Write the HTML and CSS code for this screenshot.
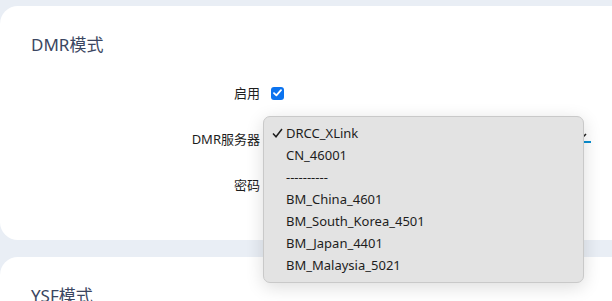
FILE: index.html
```html
<!DOCTYPE html>
<html lang="zh-CN">
<head>
  <meta charset="UTF-8">
  <title>DMR模式</title>
  <link rel="stylesheet" href="styles.css">
</head>
<body>
  <div class="page">
    <!-- DMR section -->
    <div class="card">
      <h2 class="card-title">DMR模式</h2>
      <div class="form-row">
        <label class="form-label">启用</label>
        <div class="form-control">
          <span class="checkbox">
            <svg width="9" height="8" viewBox="0 0 9 8"><path d="M1 4.2 L3.4 6.4 L8 1.2" fill="none" stroke="#fff" stroke-width="1.8" stroke-linecap="round" stroke-linejoin="round"/></svg>
          </span>
        </div>
      </div>
      <div class="form-row">
        <label class="form-label">DMR服务器</label>
        <div class="form-control">
          <div class="select">
            <span class="select-value">DRCC_XLink</span>
            <svg class="select-arrow" width="10" height="6" viewBox="0 0 10 6"><path d="M1 1 L5 5 L9 1" fill="none" stroke="#222" stroke-width="1.6"/></svg>
          </div>
          <!-- open popup of the select -->
          <ul class="dropdown">
            <li class="selected">
              <svg class="tick" width="11" height="10" viewBox="0 0 11 10"><path d="M1 5.5 L4 8.8 L10 1" fill="none" stroke="#1d1d1d" stroke-width="1.5"/></svg>
              DRCC_XLink
            </li>
            <li>CN_46001</li>
            <li>----------</li>
            <li>BM_China_4601</li>
            <li>BM_South_Korea_4501</li>
            <li>BM_Japan_4401</li>
            <li>BM_Malaysia_5021</li>
          </ul>
        </div>
      </div>
      <div class="form-row">
        <label class="form-label">密码</label>
        <div class="form-control"></div>
      </div>
    </div>

    <!-- YSF section -->
    <div class="card">
      <h2 class="card-title">YSF模式</h2>
    </div>
  </div>
</body>
</html>
```

FILE: styles.css
```css
body {
  margin: 0;
  background-color: #e9eef5;
  font-family: "Noto Sans", "Noto Sans CJK SC", sans-serif;
  color: #1d1d1d;
  overflow: hidden;
}

.page {
  padding-top: 6px;
  margin-right: -40px;
}

.card {
  background-color: #ffffff;
  border-radius: 18px;
  padding: 27px 31px 0;
  height: 207px;
  margin-bottom: 17px;
}

.card-title {
  margin: 0;
  font-size: 17px;
  font-weight: 400;
  line-height: 24px;
  color: #3b4661;
}

.form-row {
  display: flex;
  align-items: center;
  height: 46px;
}

.form-row:first-of-type {
  margin-top: 13px;
}

.form-label {
  width: 229px;
  text-align: right;
  font-size: 13px;
  line-height: 18px;
  padding-right: 11px;
}

.form-control {
  position: relative;
  flex: 1;
  display: flex;
  align-items: center;
}

.checkbox {
  display: inline-flex;
  justify-content: center;
  align-items: center;
  width: 13px;
  height: 13px;
  border-radius: 3px;
  background-color: #0b73ef;
}

.select {
  display: flex;
  align-items: flex-end;
  justify-content: space-between;
  width: 320px;
  height: 16px;
  border-bottom: 2px solid #0a8fd1;
  margin-bottom: 10px;
  font-size: 13px;
}

.select-value {
  visibility: hidden;
}

.select-arrow {
  margin: 0 4px 2px 0;
}

/* Popup list (native menu look) */
.dropdown {
  position: absolute;
  left: -8px;
  top: -9px;
  width: 319px;
  margin: 0;
  padding: 5px 0 6px;
  list-style: none;
  background-color: #e3e3e3;
  border: 1px solid #c9c9c9;
  border-radius: 7px;
  box-shadow: 0 4px 18px rgba(0, 0, 0, 0.14);
  font-size: 13px;
}

.dropdown li {
  height: 22px;
  line-height: 22px;
  padding-left: 22px;
  position: relative;
}

.dropdown .tick {
  position: absolute;
  left: 8px;
  top: 6px;
}
```
